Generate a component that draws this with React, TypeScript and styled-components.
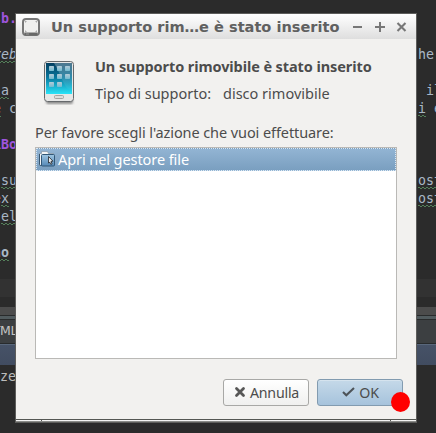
import React from 'react';
import styled, { createGlobalStyle } from 'styled-components';

const GlobalStyle = createGlobalStyle`
  * { box-sizing: border-box; }
  html, body { margin: 0; padding: 0; background: #2b2b2b; overflow: hidden; }
`;

const Desktop = styled.div`
  position: relative;
  width: 436px;
  height: 433px;
  overflow: hidden;
  background: #2b2b2b;
  color: #a9b7c6;
  font: 13.3px/20px 'DejaVu Sans Mono', monospace;
`;

const Editor = styled.div`
  padding-top: 9px;
  height: 307px;
`;

const CodeLine = styled.div<{ $current?: boolean }>`
  display: flex;
  height: 18px;
  background: ${(p) => (p.$current ? '#323232' : 'transparent')};
`;

const LeftCode = styled.div<{ $end: number }>`
  flex: none;
  display: flex;
  justify-content: flex-end;
  width: ${(p) => p.$end}px;
  height: 18px;
  white-space: pre;
`;

const RightCode = styled.div<{ $end: number }>`
  flex: none;
  display: flex;
  height: 18px;
  margin-left: ${(p) => 418 - p.$end}px;
  white-space: pre;
`;

const Token = styled.span<{ $color?: string; $bold?: boolean; $italic?: boolean; $typo?: boolean }>`
  height: 18px;
  color: ${(p) => p.$color ?? '#a9b7c6'};
  font-weight: ${(p) => (p.$bold ? 700 : 400)};
  font-style: ${(p) => (p.$italic ? 'italic' : 'normal')};
  background: ${(p) =>
    p.$typo
      ? `linear-gradient(90deg, #54805a 2px, transparent 2px) 0 16px / 4px 1px repeat-x,
         linear-gradient(90deg, #54805a 2px, transparent 2px) 2px 17px / 4px 1px repeat-x`
      : 'none'};
`;

const ScrollTrack = styled.div`
  height: 8px;
  background: #4c4c4c;
`;

const Splitter = styled.div`
  height: 5px;
  background: #515b5e;
  border: solid #292b2c;
  border-width: 1px 0;
`;

const PanelTabs = styled.div`
  height: 24px;
  padding-top: 1px;
  background: #3c3f41;
  border-bottom: 1px solid #282b2d;
  color: #c4c4c4;
  font: 12.5px/20px 'DejaVu Sans', sans-serif;
`;

const TabName = styled.div`
  width: 17px;
  display: flex;
  justify-content: flex-end;
  letter-spacing: -0.4px;
`;

const PanelHeader = styled.div`
  height: 21px;
  border-top: 1px solid #59677b;
  background: linear-gradient(#465267, #414c60);
`;

const Output = styled.div`
  padding-top: 2px;
  color: #bbbbbb;
`;

const Dialog = styled.section`
  position: absolute;
  left: 15px;
  top: 13px;
  width: 402px;
  height: 410px;
  display: flex;
  flex-direction: column;
  border: 1px solid #5d5d5b;
  background: #f2f1ef;
  color: #4c4c4c;
  font: 14.5px/20px 'Noto Sans', sans-serif;
`;

const TitleBar = styled.header`
  flex: none;
  display: flex;
  align-items: center;
  height: 25px;
  padding-left: 6px;
  background: linear-gradient(#ffffff, #dedede);
`;

const TitleText = styled.h1`
  flex: none;
  width: 301px;
  margin: 0 0 0 11px;
  color: #606060;
  font: bold 14.55px/24px 'DejaVu Sans', sans-serif;
  white-space: nowrap;
`;

const Body = styled.div`
  flex: 1;
  display: flex;
  flex-direction: column;
  padding: 18px 19px 0;
`;

const Summary = styled.div`
  display: flex;
  height: 60px;
  padding-left: 8px;
`;

const SummaryText = styled.div`
  margin-left: 20px;
  white-space: nowrap;
`;

const Heading = styled.h2`
  margin: -1px 0 7px;
  font: bold 14.5px/20px 'Noto Sans', sans-serif;
  letter-spacing: -0.09px;
`;

const Detail = styled.div`
  display: flex;
`;

const DetailLabel = styled.span`
  width: 128px;
`;

const Prompt = styled.label`
  display: block;
  height: 30px;
  padding-top: 5px;
  letter-spacing: -0.09px;
  white-space: nowrap;
`;

const ActionList = styled.div`
  flex: none;
  width: 362px;
  height: 212px;
  border: 1px solid #bab9b6;
  background: #ffffff;
`;

const ActionItem = styled.div`
  display: flex;
  align-items: center;
  gap: 3px;
  height: 23px;
  padding: 0 2px 1px;
  border: 1px dotted #dce8f2;
  background: linear-gradient(#92b4d3, #7a9fc0);
  color: #ffffff;
  letter-spacing: -0.08px;
  white-space: nowrap;
`;

const Actions = styled.div`
  display: flex;
  justify-content: flex-end;
  gap: 8px;
  padding-top: 20px;
  margin-right: -6px;
`;

const Button = styled.button<{ $primary?: boolean }>`
  display: flex;
  align-items: center;
  justify-content: center;
  gap: 4px;
  width: 86px;
  height: 27px;
  padding: 0 0 0 1px;
  border: 1px solid ${(p) => (p.$primary ? '#829bb0' : '#a8a8a6')};
  border-radius: 3px;
  background: ${(p) => (p.$primary ? 'linear-gradient(#c5d9e9, #a6c3dc)' : 'linear-gradient(#ffffff, #f0f0ef)')};
  box-shadow: inset 0 1px ${(p) => (p.$primary ? '#d5e3ee' : '#ffffff')};
  color: #4c4c4c;
  font: 14.2px/20px 'Noto Sans', sans-serif;
  letter-spacing: -0.2px;
`;

const Frame = styled.footer`
  flex: none;
  display: grid;
  grid-template-columns: 26px 1fr 26px;
  height: 3px;
  border-top: 1px solid #555753;
  border-bottom: 1px solid #8a8b88;
`;

const FrameGrip = styled.span<{ $side?: 'left' | 'right' }>`
  background: #f4f4f3;
  border-left: ${(p) => (p.$side === 'right' ? '1px solid #555753' : 'none')};
  border-right: ${(p) => (p.$side === 'left' ? '1px solid #555753' : 'none')};
`;

const ClickMarker = styled.div`
  position: absolute;
  left: 375px;
  top: 378px;
  width: 19px;
  height: 20px;
  border-radius: 50%;
  background: #ff0000;
`;

const WindowMark = () => (
  <svg width="18" height="18" viewBox="0 0 18 18">
    <rect x="1" y="1" width="16" height="16" rx="3" fill="#f1f1f0" stroke="#777" strokeWidth="2" />
    <path d="M2.5 16h13" stroke="#686868" strokeWidth="3" />
    <rect x="3" y="3" width="12" height="11" rx="1.5" fill="#efefee" />
    <path d="M3 3h2L3 5zM15 3h-2l2 2zM3 14h2l-2-2zM15 14h-2l2-2z" fill="#aaa" />
    <path d="M4 16h3" stroke="#999" />
  </svg>
);

const WindowControls = () => (
  <svg width="56" height="14" viewBox="0 0 56 14" fill="none" stroke="#777" strokeWidth="2">
    <path d="M1 7h9M23 7h10M28 2v10" />
    <path d="m45.5 3 8 8m0-8-8 8" strokeWidth="2.1" />
  </svg>
);

const PhoneIcon = () => (
  <svg width="32" height="50" viewBox="-1 -2 32 50">
    <defs>
      <linearGradient id="screen" x1="0" y1="0" x2="0" y2="1">
        <stop stopColor="#043f60" />
        <stop offset=".45" stopColor="#08759b" />
        <stop offset="1" stopColor="#29e3f8" />
      </linearGradient>
      <linearGradient id="gloss" x1="0" y1="0" x2="0" y2="1">
        <stop stopColor="#fff" stopOpacity=".3" />
        <stop offset="1" stopColor="#fff" stopOpacity=".03" />
      </linearGradient>
      <linearGradient id="tile" x1="0" y1="0" x2="0" y2="1">
        <stop stopColor="#b5cbd7" />
        <stop offset="1" stopColor="#70bbd0" />
      </linearGradient>
      <filter id="soft"><feGaussianBlur stdDeviation=".8" /></filter>
    </defs>
    <rect x="2" y="40" width="27" height="5" rx="2" fill="#777" opacity=".8" filter="url(#soft)" />
    <rect x=".5" y="2.5" width="29" height="40" rx="3" fill="#e7e7e6" stroke="#66696b" />
    <path d="M2 4h26v31H2z" fill="url(#screen)" />
    <path d="M10 4h18v27C20 31 19 19 10 4z" fill="url(#gloss)" />
    {[0, 1, 2].map((row) =>
      [0, 1, 2].map((col) =>
        row === 2 && col === 2 ? null : (
          <rect key={`${row}-${col}`} x={5 + col * 8} y={7 + row * 8} width="5" height="5" rx=".7" fill="url(#tile)" />
        ),
      ),
    )}
    <rect x="10.5" y="36.5" width="9" height="3" rx="1" fill="#dededc" stroke="#a3a3a1" />
  </svg>
);

const FolderIcon = () => (
  <svg width="16" height="16" viewBox="0 0 16 16">
    <defs>
      <linearGradient id="folder" x1="0" y1="0" x2="0" y2="1">
        <stop stopColor="#9fc6e2" />
        <stop offset="1" stopColor="#5589b7" />
      </linearGradient>
    </defs>
    <path d="M.5 14.5V2.5h2v-2h6l1 2h5V5" fill="#f3f5f6" stroke="#7a8a97" strokeWidth=".6" />
    <path d="M.5 3v10.5q0 1 1 1h2" fill="none" stroke="#38556d" />
    <rect x="2.5" y="3.5" width="13" height="11.5" rx="1" fill="url(#folder)" stroke="#315777" />
    <path d="m9.5 5.5 4.5 4.7-2 .2 1.1 2.4-1.3.6-1.1-2.4-1.2 1.2z" fill="#e8eaec" stroke="#22262b" strokeWidth=".8" />
  </svg>
);

const CancelIcon = () => (
  <svg width="12" height="14" viewBox="0 0 12 14">
    <path d="m2.5 2.5 7 7m0-7-7 7" stroke="#575757" strokeWidth="2.8" strokeLinecap="round" />
  </svg>
);

const AcceptIcon = () => (
  <svg width="13" height="14" viewBox="0 0 13 14">
    <path d="m1 6 3.3 3.2L12 2" fill="none" stroke="#4d5358" strokeWidth="2.1" />
  </svg>
);

type Part = { text: string; color?: string; bold?: boolean; italic?: boolean; typo?: boolean };
type Line = { left?: Part[]; end?: number; right?: Part[]; current?: boolean };

const lines: Line[] = [
  { left: [{ text: 'sb.', color: '#9e55dc', bold: true }], end: 17 },
  {},
  { left: [{ text: 'reb', italic: true, typo: true }], end: 17, right: [{ text: 'he' }] },
  {},
  { left: [{ text: 'la', typo: true }], end: 9, right: [{ text: ' il' }] },
  { left: [{ text: 'e', color: '#cc7832', typo: true }, { text: ' c' }], end: 17, right: [{ text: 'i', typo: true }, { text: ' e' }] },
  {},
  { left: [{ text: 'iBo', color: '#9e55dc', bold: true }], end: 17 },
  {},
  { left: [{ text: 'su', typo: true }], end: 17, right: [{ text: 'ost', typo: true }] },
  { left: [{ text: 'e', color: '#cc7832' }, { text: 'x', typo: true }], end: 9, right: [{ text: 'ost', typo: true }] },
  { left: [{ text: 'el', typo: true }], end: 17 },
  {},
  { left: [{ text: 'no', bold: true, typo: true }], end: 9 },
  {},
  { current: true },
];

const Tokens = ({ parts = [] }: { parts?: Part[] }) => (
  <>
    {parts.map((part, i) => (
      <Token key={i} $color={part.color} $bold={part.bold} $italic={part.italic} $typo={part.typo}>{part.text}</Token>
    ))}
  </>
);

export default function App() {
  return (
    <>
      <GlobalStyle />
      <Desktop>
        <Editor>
          {lines.map((line, i) => (
            <CodeLine key={i} $current={line.current}>
              <LeftCode $end={line.end ?? 16}><Tokens parts={line.left} /></LeftCode>
              <RightCode $end={line.end ?? 16}><Tokens parts={line.right} /></RightCode>
            </CodeLine>
          ))}
        </Editor>
        <ScrollTrack />
        <Splitter />
        <PanelTabs><TabName>HTML</TabName></PanelTabs>
        <PanelHeader />
        <Output>ze</Output>
        <Dialog role="dialog">
          <TitleBar>
            <WindowMark />
            <TitleText>Un supporto rim…e è stato inserito</TitleText>
            <WindowControls />
          </TitleBar>
          <Body>
            <Summary>
              <PhoneIcon />
              <SummaryText>
                <Heading>Un supporto rimovibile è stato inserito</Heading>
                <Detail><DetailLabel>Tipo di supporto:</DetailLabel><span>disco rimovibile</span></Detail>
              </SummaryText>
            </Summary>
            <Prompt>Per favore scegli l'azione che vuoi effettuare:</Prompt>
            <ActionList>
              <ActionItem><FolderIcon />Apri nel gestore file</ActionItem>
            </ActionList>
            <Actions>
              <Button><CancelIcon />Annulla</Button>
              <Button $primary><AcceptIcon />OK</Button>
            </Actions>
          </Body>
          <Frame><FrameGrip $side="left" /><FrameGrip /><FrameGrip $side="right" /></Frame>
          <ClickMarker />
        </Dialog>
      </Desktop>
    </>
  );
}
